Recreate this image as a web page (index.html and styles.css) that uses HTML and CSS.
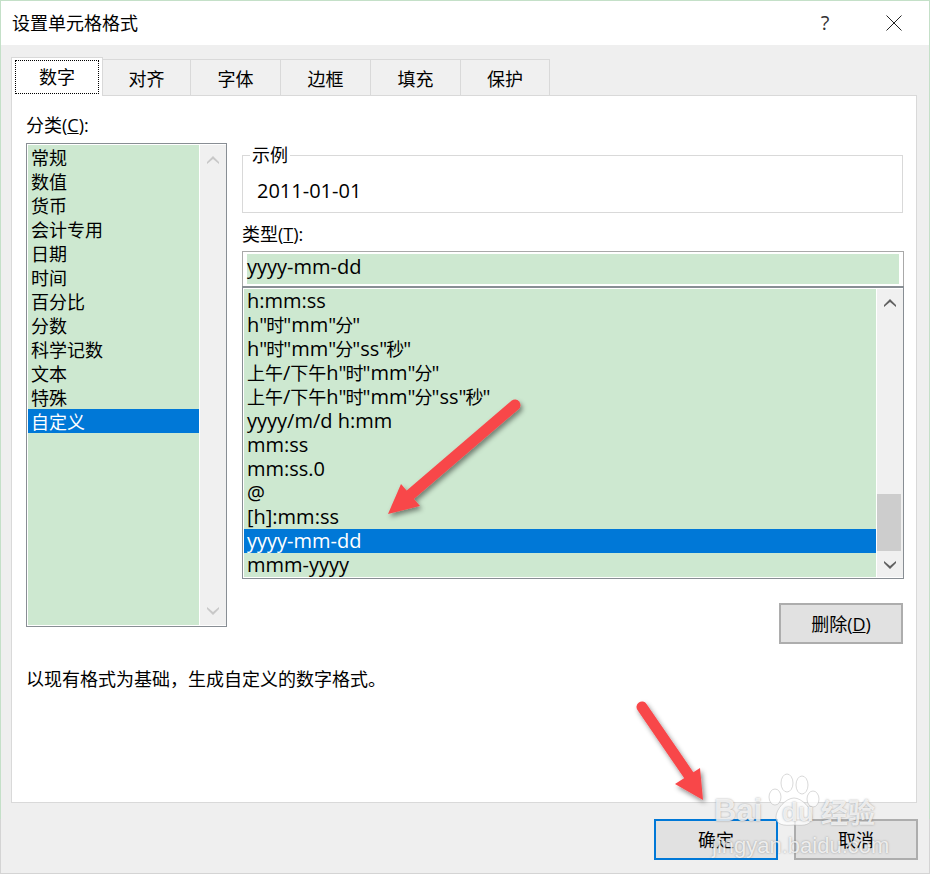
FILE: index.html
```html
<!DOCTYPE html>
<html lang="zh-CN">
<head>
    <meta charset="UTF-8">
    <title>设置单元格格式</title>
    <link rel="stylesheet" href="styles.css">
</head>
<body>

    <div class="dialog">
        <div class="titlebar">
            <span class="title">设置单元格格式</span>
            <span class="help">?</span>
            <svg class="close" width="16" height="16" viewBox="0 0 16 16"><path d="M0.5 0.5L15.5 15.5M15.5 0.5L0.5 15.5" stroke="#222" fill="none"/></svg>
        </div>

        <div class="tabs">
            <div class="tab active"><span class="focus">数字</span></div>
            <div class="tab">对齐</div>
            <div class="tab">字体</div>
            <div class="tab">边框</div>
            <div class="tab">填充</div>
            <div class="tab">保护</div>
        </div>

        <div class="panel">
            <div class="columns">
                <div class="left">
                    <div class="label">分类(<u>C</u>):</div>
                    <div class="listbox cat">
                        <div class="rows">
                            <div class="row">常规</div>
                            <div class="row">数值</div>
                            <div class="row">货币</div>
                            <div class="row">会计专用</div>
                            <div class="row">日期</div>
                            <div class="row">时间</div>
                            <div class="row">百分比</div>
                            <div class="row">分数</div>
                            <div class="row">科学记数</div>
                            <div class="row">文本</div>
                            <div class="row">特殊</div>
                            <div class="row selected">自定义</div>
                        </div>
                        <div class="scrollbar">
                            <svg class="arrow" width="12" height="8" viewBox="0 0 12 8"><path d="M0 6L6 0L12 6L12 8L6 3L0 8Z" fill="#c8c8c8"/></svg>
                            <svg class="arrow" width="12" height="8" viewBox="0 0 12 8"><path d="M0 2L6 8L12 2L12 0L6 5L0 0Z" fill="#c8c8c8"/></svg>
                        </div>
                    </div>
                </div>

                <div class="right">
                    <fieldset class="sample">
                        <legend>示例</legend>
                        <div class="sample-value">2011-01-01</div>
                    </fieldset>

                    <div class="label type-label">类型(<u>T</u>):</div>
                    <div class="type-input"><div class="type-value">yyyy-mm-dd</div></div>
                    <div class="listbox fmt">
                        <div class="rows">
                            <div class="row">h:mm:ss</div>
                            <div class="row">h"<span class="zh q">时</span>"mm"<span class="zh q">分</span>"</div>
                            <div class="row">h"<span class="zh q">时</span>"mm"<span class="zh q">分</span>"ss"<span class="zh q">秒</span>"</div>
                            <div class="row"><span class="zh">上午</span>/<span class="zh">下午</span>h"<span class="zh q">时</span>"mm"<span class="zh q">分</span>"</div>
                            <div class="row"><span class="zh">上午</span>/<span class="zh">下午</span>h"<span class="zh q">时</span>"mm"<span class="zh q">分</span>"ss"<span class="zh q">秒</span>"</div>
                            <div class="row">yyyy/m/d h:mm</div>
                            <div class="row">mm:ss</div>
                            <div class="row">mm:ss.0</div>
                            <div class="row">@</div>
                            <div class="row">[h]:mm:ss</div>
                            <div class="row selected">yyyy-mm-dd</div>
                            <div class="row">mmm-yyyy</div>
                        </div>
                        <div class="scrollbar">
                            <svg class="arrow" width="12" height="8" viewBox="0 0 12 8"><path d="M0 6L6 0L12 6L12 8L6 3L0 8Z" fill="#606060"/></svg>
                            <div class="thumb"></div>
                            <svg class="arrow" width="12" height="8" viewBox="0 0 12 8"><path d="M0 2L6 8L12 2L12 0L6 5L0 0Z" fill="#606060"/></svg>
                        </div>
                    </div>
                    <div class="delete-row"><button class="btn">删除(<u>D</u>)</button></div>
                </div>
            </div>
            <p class="desc">以现有格式为基础，生成自定义的数字格式。</p>
        </div>

        <div class="footer">
            <button class="btn default">确定</button>
            <button class="btn">取消</button>
        </div>
    </div>

    <!-- annotations on top of the screenshot -->
    <svg class="marks" width="930" height="874" viewBox="0 0 930 874">
        <defs>
            <filter id="shade" x="-30%" y="-30%" width="160%" height="160%">
                <feDropShadow dx="2" dy="3" stdDeviation="2.5" flood-color="#000" flood-opacity="0.45"/>
            </filter>
        </defs>
        <g filter="url(#shade)" fill="#f8474a">
            <path d="M515 405L410 495" stroke="#f8474a" stroke-width="11" stroke-linecap="round"/>
            <path d="M388 514L401 484L420 506Z"/>
            <path d="M642 707L690 777" stroke="#f8474a" stroke-width="11" stroke-linecap="round"/>
            <path d="M703 800L700 768L675 784Z"/>
        </g>
    </svg>

    <div class="watermark">
        <svg class="paw" width="62" height="58" viewBox="0 0 62 58">
            <g fill="#fff" fill-opacity="0.75" stroke="#aaa" stroke-opacity="0.45">
                <ellipse cx="11" cy="26" rx="6" ry="8"/>
                <ellipse cx="23" cy="12" rx="6" ry="9"/>
                <ellipse cx="38" cy="14" rx="6" ry="9"/>
                <ellipse cx="49" cy="28" rx="6" ry="8"/>
                <path d="M30 27C38 27 48 38 48 46C48 54 40 55 30 54C20 55 12 54 12 46C12 38 22 27 30 27Z"/>
            </g>
        </svg>
        <span class="wm-bai">Bai</span>
        <span class="wm-du">du</span>
        <span class="wm-jy">经验</span>
        <span class="wm-url">jingyan.baidu.com</span>
    </div>

</body>
</html>
```

FILE: styles.css
```css
* { margin: 0; padding: 0; box-sizing: border-box; }
html, body { width: 930px; height: 874px; overflow: hidden; }
body { position: relative; background: linear-gradient(#c4e0c8 819px, #d4d4d4 819px); color: #000; font-family: "Open Sans", "Noto Sans CJK SC", sans-serif; font-size: 18px; line-height: 24px; }
button { font: inherit; color: inherit; }

.dialog { margin: 1px 1px 0 1px; height: 873px; background: #efefef; border-bottom: 1px solid #d4d4d4; }

.titlebar { height: 44px; background: #fff; display: flex; align-items: center; padding: 0 27px 0 11px; }
.title { flex: 1; }
.help { width: 20px; margin-right: 51px; text-align: center; color: #333; font-size: 20px; }
.close { display: block; }

.tabs { display: flex; align-items: flex-end; height: 50px; padding-left: 10px; }
.tab { width: 91px; height: 36px; margin-right: -1px; background: #f0f0f0; border: 1px solid #d9d9d9; border-bottom: none; display: flex; align-items: center; justify-content: center; padding-top: 2px; }
.tab.active { position: relative; z-index: 1; width: 92px; height: 39px; margin-bottom: -1px; background: #fff; padding: 3px; }
.tab.active + .tab { width: 89px; }
.tab:last-child { width: 90px; }
.focus { flex: 1; height: 34px; border: 1px dotted #000; display: flex; align-items: center; justify-content: center; }

.panel { height: 708px; margin: 0 12px 0 10px; background: #fff; border: 1px solid #d9d9d9; padding: 17px 0 0 14px; }
.columns { display: grid; grid-template-columns: 201px 662px; column-gap: 15px; }
.right { padding-top: 30px; }
.label { height: 24px; margin-bottom: 6px; }

.listbox { display: flex; background: #fff; border: 1px solid #888e94; padding: 1px 0 1px 1px; }
.rows { flex: 1; background: #cde8d0; }
.row { height: 24px; white-space: nowrap; }
.row.selected { background: #0078d7; color: #fff; }
.scrollbar { width: 26px; margin-left: 1px; background: #f0f0f0; display: flex; flex-direction: column; align-items: center; justify-content: space-between; }
.arrow { display: block; flex: none; }

.cat { height: 484px; }
.cat .row { padding-left: 3px; line-height: 26px; }
.cat .scrollbar { padding: 11px 0 10px; }

.sample { height: 70px; margin-right: 1px; border: 1px solid #d9d9d9; padding: 0 14px; }
.sample legend { margin-left: -7px; padding: 0 2px; line-height: 24px; }
.sample-value { margin-top: 12px; font-size: 20px; }

.type-label { margin: 9px 0 5px; }
.type-input { height: 36px; border: 1px solid #a9a9a9; border-bottom: none; padding: 2px 4px; }
.type-value { height: 30px; background: #cde8d0; line-height: 26px; font-size: 20px; }

.fmt { height: 293px; margin-top: -1px; border-top-width: 2px; }
.fmt .row { padding-left: 3px; font-size: 20px; }
.zh { font-size: 18px; }
.zh.q { margin: 0 -1px; }
.fmt .scrollbar { padding: 10px 0 8px; }
.thumb { align-self: flex-start; width: 24px; height: 57px; margin-top: 181px; margin-bottom: 4px; background: #cdcdcd; }

.delete-row { display: flex; justify-content: flex-end; margin: 24px 1px 0 0; }
.btn { width: 124px; height: 41px; background: #e1e1e1; border: 2px solid #adadad; }
.btn.default { border-color: #0078d7; }

.desc { margin-top: 23px; }

.footer { display: flex; justify-content: flex-end; gap: 16px; padding: 16px 11px 0 0; }

.marks { position: absolute; left: 0; top: 0; pointer-events: none; }

.watermark { position: absolute; left: 0; top: 0; width: 930px; height: 874px; pointer-events: none; color: rgba(255, 255, 255, 0.78); text-shadow: 0 0 2px rgba(90, 90, 90, 0.55); }
.watermark span { position: absolute; white-space: nowrap; }
.paw { position: absolute; left: 764px; top: 771px; }
.wm-bai { left: 714px; top: 794px; font: bold 31px/34px "Liberation Sans", sans-serif; }
.wm-du { left: 782px; top: 797px; font: bold 26px/30px "Liberation Sans", sans-serif; }
.wm-jy { left: 821px; top: 796px; font: bold 27px/32px "Noto Sans CJK SC", sans-serif; }
.wm-url { left: 712px; top: 834px; font: 22px/24px "Liberation Sans", sans-serif; }
```
